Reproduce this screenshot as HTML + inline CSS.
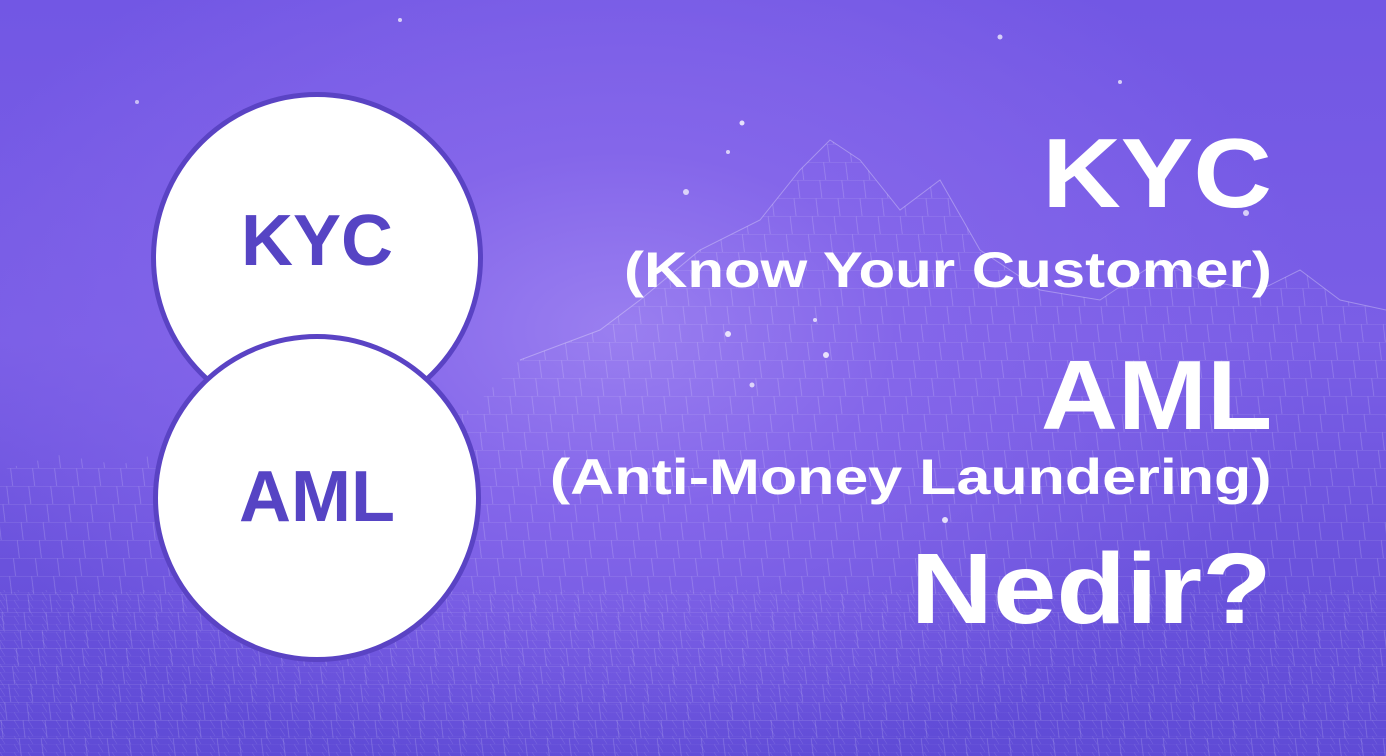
<!DOCTYPE html>
<html><head><meta charset="utf-8"><style>
html,body{margin:0;padding:0}
body{width:1386px;height:756px;overflow:hidden;position:relative;font-family:"Liberation Sans",sans-serif;
background:radial-gradient(ellipse 700px 450px at 620px 330px,#9a7ff0 0%,#8466ea 40%,rgba(120,90,230,0) 100%),linear-gradient(180deg,#7257e4 0%,#7a5ee6 45%,#6a52dc 75%,#5f4bd6 100%);}
.c{position:absolute;border-radius:50%;background:#fff;border:5px solid #5a43c4;box-sizing:border-box;display:flex;align-items:center;justify-content:center;color:#5644c4;font-weight:bold;font-size:72px}
.c span{display:inline-block;transform:scaleX(1.0)}
.t{position:absolute;right:114px;color:#fff;font-weight:bold;white-space:nowrap;text-align:right;transform-origin:right center}
</style></head><body>
<svg width="1386" height="756" style="position:absolute;left:0;top:0" viewBox="0 0 1386 756">
<defs>
<pattern id="m" width="22" height="18" patternUnits="userSpaceOnUse" patternTransform="skewX(-12)">
<path d="M0 0 L22 0 M0 0 L6 18" stroke="#fff" stroke-opacity="0.22" stroke-width="0.7" fill="none"/>
</pattern>
<pattern id="g" width="14" height="8" patternUnits="userSpaceOnUse">
<path d="M0 0 L14 0 M0 0 L5 8" stroke="#fff" stroke-opacity="0.12" stroke-width="0.6" fill="none"/>
</pattern>
</defs>
<path d="M0 470 L60 455 L120 465 L200 440 L300 450 L430 420 L470 410 L520 360 L600 330 L640 300 L700 250 L760 220 L800 170 L830 140 L860 160 L900 210 L940 180 L980 250 L1040 290 L1100 300 L1160 260 L1200 280 L1260 290 L1300 270 L1340 300 L1386 310 L1386 756 L0 756 Z" fill="url(#m)"/>
<path d="M0 590 L1386 590 L1386 756 L0 756 Z" fill="url(#g)"/>
<path d="M520 360 L600 330 L640 300 L700 250 L760 220 L800 170 L830 140 L860 160 L900 210 L940 180 L980 250 L1040 290 L1100 300 L1160 260 L1200 280 L1260 290 L1300 270 L1340 300 L1386 310" stroke="#fff" stroke-opacity="0.3" fill="none"/>
<g fill="#fff">
<circle cx="400" cy="20" r="2" opacity=".7"/><circle cx="137" cy="102" r="2" opacity=".6"/><circle cx="742" cy="123" r="2.5" opacity=".8"/><circle cx="728" cy="152" r="2" opacity=".7"/><circle cx="686" cy="192" r="3" opacity=".7"/><circle cx="1000" cy="37" r="2.5" opacity=".7"/><circle cx="1120" cy="82" r="2" opacity=".7"/><circle cx="1246" cy="213" r="3" opacity=".7"/><circle cx="728" cy="334" r="3" opacity=".8"/><circle cx="826" cy="355" r="3" opacity=".8"/><circle cx="815" cy="320" r="2" opacity=".7"/><circle cx="752" cy="385" r="2.5" opacity=".7"/><circle cx="945" cy="520" r="3" opacity=".8"/>
</g>
</svg>
<div class="c" style="left:151px;top:92px;width:332px;height:332px;padding-bottom:34px"><span>KYC</span></div>
<div class="c" style="left:153px;top:334px;width:328px;height:328px;padding-bottom:2px"><span>AML</span></div>
<div class="t" style="top:118px;font-size:98px;line-height:110px;transform:scaleX(1.11)">KYC</div>
<div class="t" style="top:238px;font-size:50px;line-height:64px;transform:scaleX(1.2)">(Know Your Customer)</div>
<div class="t" style="top:340px;font-size:98px;line-height:110px;transform:scaleX(1.09)">AML</div>
<div class="t" style="top:445px;font-size:50px;line-height:64px;transform:scaleX(1.22)">(Anti-Money Laundering)</div>
<div class="t" style="top:532px;font-size:100px;line-height:114px;transform:scaleX(1.14)">Nedir?</div>
</body></html>
